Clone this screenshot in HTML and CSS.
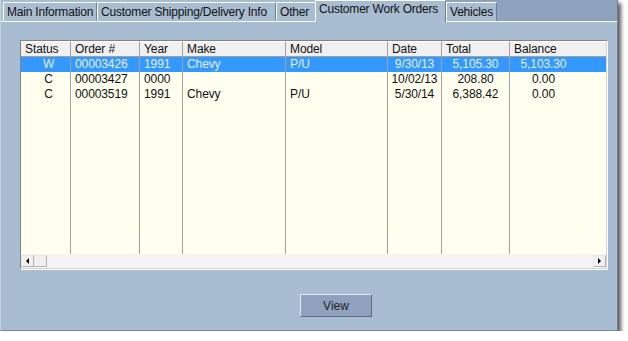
FILE: index.html
```html
<!DOCTYPE html>
<html>
<head>
<meta charset="utf-8">
<title>Customer Work Orders</title>
<link rel="stylesheet" href="styles.css">
</head>
<body>
<div class="window">
  <div class="tabs">
    <div class="tab t1">Main Information</div>
    <div class="tab t2">Customer Shipping/Delivery Info</div>
    <div class="tab t3">Other</div>
    <div class="tab t4 active">Customer Work Orders</div>
    <div class="tab t5">Vehicles</div>
  </div>
  <div class="panel">
    <div class="list">
      <table class="grid">
        <thead>
          <tr>
            <th class="c-status">Status</th>
            <th class="c-order">Order #</th>
            <th class="c-year">Year</th>
            <th class="c-make">Make</th>
            <th class="c-model">Model</th>
            <th class="c-date">Date</th>
            <th class="c-total">Total</th>
            <th class="c-bal">Balance</th>
          </tr>
        </thead>
        <tbody>
          <tr class="sel">
            <td class="a-status">W</td><td>00003426</td><td>1991</td><td>Chevy</td><td>P/U</td><td class="a-mid">9/30/13</td><td class="a-mid">5,105.30</td><td class="a-bal">5,103.30</td>
          </tr>
          <tr>
            <td class="a-status">C</td><td>00003427</td><td>0000</td><td></td><td></td><td class="a-mid">10/02/13</td><td class="a-mid">208.80</td><td class="a-bal">0.00</td>
          </tr>
          <tr>
            <td class="a-status">C</td><td>00003519</td><td>1991</td><td>Chevy</td><td>P/U</td><td class="a-mid">5/30/14</td><td class="a-mid">6,388.42</td><td class="a-bal">0.00</td>
          </tr>
          <tr class="filler">
            <td></td><td></td><td></td><td></td><td></td><td></td><td></td><td></td>
          </tr>
        </tbody>
      </table>
      <div class="hscroll">
        <div class="sbtn"><span class="arrow-left"></span></div>
        <div class="thumb"></div>
        <div class="track"></div>
        <div class="sbtn"><span class="arrow-right"></span></div>
      </div>
    </div>
    <div class="actions">
      <button class="btn" type="button">View</button>
    </div>
  </div>
</div>
</body>
</html>
```
FILE: styles.css
```css
* { box-sizing: border-box; }

body {
  margin: 0;
  background: #ffffff;
  font-family: "Liberation Sans", Arial, sans-serif;
  font-size: 12px;
  color: #111;
}

.window {
  width: 618px;
  height: 331px;
  background: #a9bdd2;
  border-left: 1px solid #c4d2e0;
  border-bottom: 1px solid #7d8a99;
  border-right: 1px solid #6f7c8b;
  box-shadow: 3px 3px 4px rgba(0, 0, 0, 0.65);
  display: flex;
  flex-direction: column;
}

.tabs {
  display: flex;
  align-items: flex-end;
  height: 21px;
  padding-left: 2px;
  background: linear-gradient(to right, #a9bdd2 444px, #8ea2bf 444px);
}

.tab {
  height: 19px;
  padding: 2px 0 0 3px;
  line-height: 15px;
  letter-spacing: -0.2px;
  white-space: nowrap;
  overflow: hidden;
  background: #a9bdd2;
  border-top: 1px solid #ffffff;
  border-left: 1px solid #ffffff;
  border-right: 1px solid #6f7f92;
}

.t1 { width: 94px; }
.t2 { width: 179px; }
.t3 { width: 39px; border-right: none; }
.t4 { width: 131px; }
.t5 { width: 51px; }

.tab.active {
  height: 22px;
  margin-bottom: -1px;
  padding-top: 1px;
  position: relative;
  z-index: 1;
}

.panel {
  flex: 1;
  border-top: 1px solid #ffffff;
  padding: 18px 0 0 19px;
}

.list {
  width: 587px;
  height: 229px;
  border-top: 1px solid #828282;
  border-left: 1px solid #828282;
  border-right: 1px solid #d4d4d4;
  border-bottom: 1px solid #d4d4d4;
  box-shadow: 1px 1px 0 #ffffff;
  background: #fffff0;
  display: flex;
  flex-direction: column;
}

.grid {
  width: 585px;
  height: 213px;
  table-layout: fixed;
  border-collapse: separate;
  border-spacing: 0;
  background: #fffff0;
  letter-spacing: -0.1px;
}

.grid th {
  height: 16px;
  padding: 0 0 0 4px;
  font-weight: normal;
  text-align: left;
  line-height: 14px;
  background: #f0f0f0;
  border-top: 1px solid #ffffff;
  border-right: 1px solid #a0a0a0;
  border-bottom: 1px solid #a0a0a0;
  white-space: nowrap;
  overflow: hidden;
}

.grid td {
  height: 15px;
  padding: 0 0 0 4px;
  line-height: 15px;
  border-right: 1px solid #a0a0a0;
  white-space: nowrap;
  overflow: hidden;
}

.grid th:last-child,
.grid td:last-child { border-right: none; }

.c-status { width: 50px; }
.c-order { width: 69px; }
.c-year { width: 43px; }
.c-make { width: 103px; }
.c-model { width: 102px; }
.c-date { width: 54px; }
.c-total { width: 68px; }
.c-bal { width: 96px; }

.grid td.a-status { text-align: center; padding: 0 0 0 6px; }
.grid td.a-mid { text-align: center; padding: 0; }
.grid td.a-bal { text-align: center; padding: 0 29px 0 0; }

.grid tr.sel td {
  background: #3399ff;
  color: #e4edf8;
}

.grid tr.filler td { height: auto; }

.hscroll {
  height: 14px;
  display: flex;
  align-items: flex-end;
  padding-bottom: 1px;
  background: #f4f4f4;
}

.sbtn, .thumb {
  width: 13px;
  height: 12px;
  border: 1px solid #b4b4b4;
  border-top-color: #e8e8e8;
  border-left-color: #e8e8e8;
  background: #f0f0f0;
  display: flex;
  align-items: center;
  justify-content: center;
}

.track { flex: 1; }

.arrow-left {
  width: 0;
  height: 0;
  border-top: 3px solid transparent;
  border-bottom: 3px solid transparent;
  border-right: 3px solid #000;
}

.arrow-right {
  width: 0;
  height: 0;
  border-top: 3px solid transparent;
  border-bottom: 3px solid transparent;
  border-left: 3px solid #000;
}

.actions {
  margin-top: 25px;
  padding-left: 280px;
}

.btn {
  width: 72px;
  height: 23px;
  padding: 0;
  font-family: "Liberation Sans", Arial, sans-serif;
  font-size: 12px;
  color: #222;
  background: #8ea2bf;
  border: 1px solid;
  border-color: #dfe7f0 #5e6b7b #5e6b7b #dfe7f0;
}
```
